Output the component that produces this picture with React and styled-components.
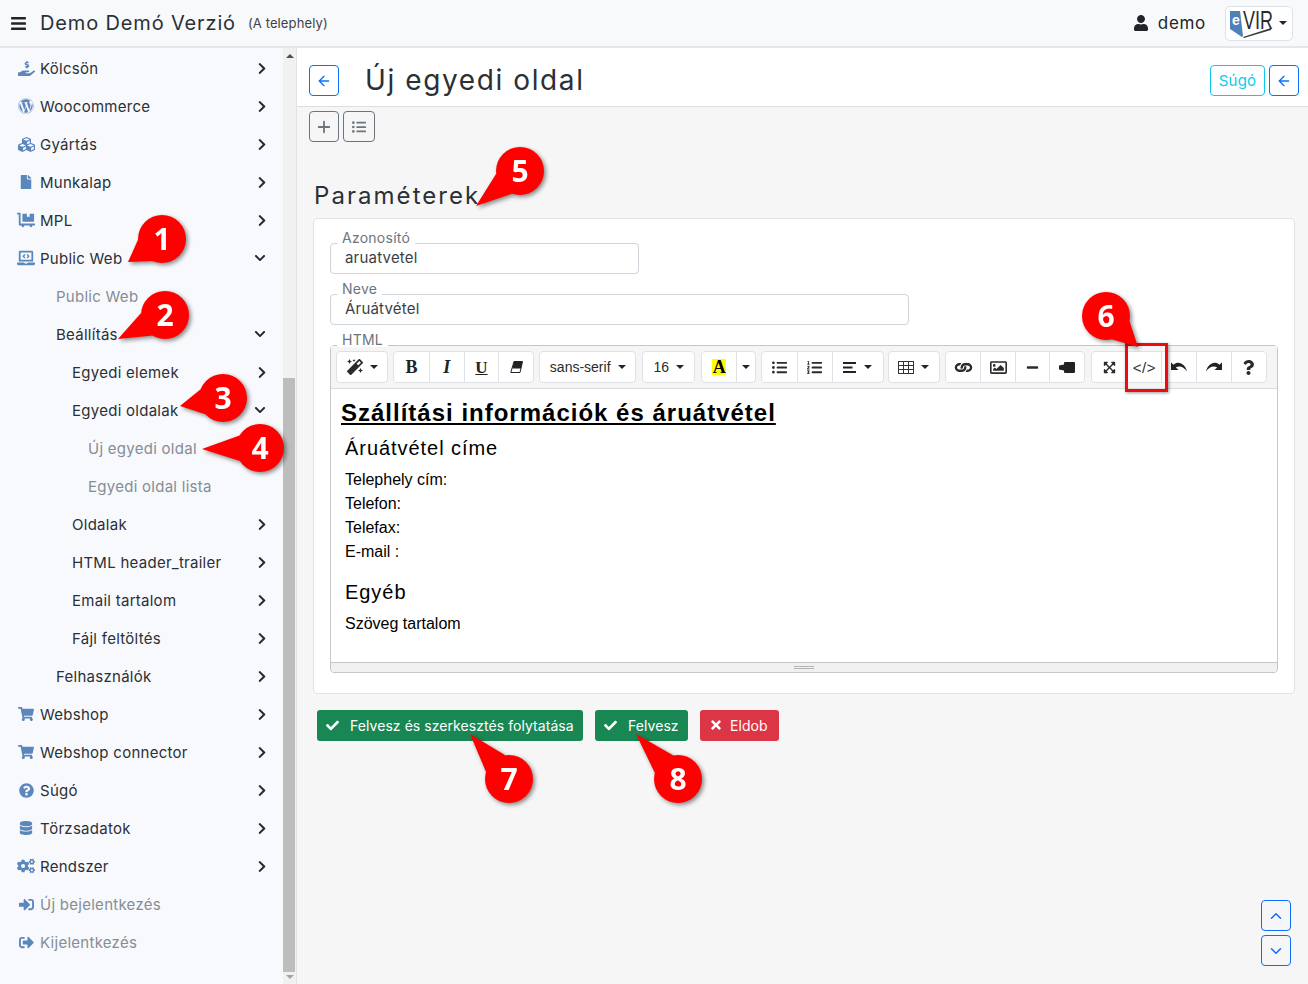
import React from "react";
import styled, { createGlobalStyle } from "styled-components";
import {
  FaBars, FaChevronDown, FaChevronRight, FaCheck, FaCogs, FaCubes, FaDatabase,
  FaDollyFlatbed, FaExpandArrowsAlt, FaFile, FaHandHoldingUsd, FaLaptopCode,
  FaLink, FaListOl, FaListUl, FaMagic, FaMinus, FaQuestion, FaQuestionCircle, FaRegImage,
  FaShoppingCart, FaSignInAlt, FaSignOutAlt, FaTimes, FaUser, FaWordpress,
} from "react-icons/fa";
import { ArrowLeft, ChevronDown, ChevronUp, Plus } from "lucide-react";

const GlobalStyle = createGlobalStyle`
  html, body { margin: 0; padding: 0; height: 100%; }
  body {
    font-family: Inter, "Open Sans", sans-serif;
    color: #212529;
    background: #f6f6f6;
    overflow: hidden;
  }
  * { box-sizing: border-box; }
`;

const Page = styled.div`
  position: relative;
  width: 1308px;
  height: 984px;
  display: flex;
  flex-direction: column;
  overflow: hidden;
`;

/* felso sav */
const TopBar = styled.header`
  height: 48px;
  flex: none;
  display: flex;
  align-items: center;
  padding: 0 15px 0 10px;
  background: #f8f9fa;
  border-bottom: 2px solid #e4e6e9;
  svg { flex: none; }
`;

const AppTitle = styled.span`
  margin-left: 13px;
  font-size: 20px;
  letter-spacing: 0.85px;
  color: #2b3036;
`;

const AppSub = styled.span`
  margin-left: 12px;
  font-size: 13px;
  letter-spacing: 0.12px;
  color: #3c4248;
`;

const UserBox = styled.div`
  margin-left: auto;
  display: flex;
  align-items: center;
  gap: 9px;
  font-size: 17px;
  letter-spacing: 0.7px;
`;

const LogoButton = styled.div`
  margin-left: 19px;
  width: 68px;
  height: 35px;
  display: flex;
  align-items: center;
  gap: 5px;
  padding-left: 4px;
  background: #fff;
  border: 1px solid #dee2e6;
  border-radius: 5px;
`;

const LogoSvg = styled.svg`
  overflow: visible;
`;

const Caret = styled.span`
  width: 0;
  height: 0;
  flex: none;
  border-left: 4px solid transparent;
  border-right: 4px solid transparent;
  border-top: 4px solid ${(p) => p.$color || "#212529"};
`;

const Body = styled.div`
  flex: 1;
  min-height: 0;
  display: flex;
`;

/* oldalsav */
const Sidebar = styled.nav`
  width: 283px;
  flex: none;
  padding-top: 1px;
  background: #f8f9fc;
  overflow: hidden;
`;

const NavRow = styled.div`
  height: 38px;
  display: flex;
  align-items: center;
  padding-left: ${(p) => p.$indent}px;
  font-size: 15px;
  letter-spacing: 0.27px;
  color: ${(p) => (p.$muted ? "#858d96" : "#2b3036")};
`;

const NavIcon = styled.span`
  width: 18px;
  flex: none;
  display: flex;
  justify-content: center;
  color: #5b87bd;
  margin-right: 5px;
`;

const NavArrow = styled.span`
  margin-left: auto;
  width: 12px;
  display: flex;
  justify-content: center;
  margin-right: ${(p) => (p.$open ? 17 : 15)}px;
  color: #212a36;
`;

const ScrollTrack = styled.div`
  width: 13px;
  flex: none;
  display: flex;
  flex-direction: column;
  align-items: center;
  padding-top: 6px;
  background: #f1f1f1;
`;

const ScrollThumb = styled.div`
  width: 12px;
  height: 594px;
  margin-top: 320px;
  align-self: flex-start;
  background: #bdbdbd;
`;

const TrackArrow = styled.span`
  width: 0;
  height: 0;
  border-left: 4px solid transparent;
  border-right: 4px solid transparent;
  ${(p) => (p.$down ? "border-top: 4px solid #a3a3a3; margin-top: 3px;" : "border-bottom: 4px solid #505050;")}
`;

/* tartalom */
const Main = styled.main`
  flex: 1;
  min-width: 0;
  border-left: 1px solid #e2e2e2;
  background: #f6f6f6;
`;

const TitleBar = styled.div`
  height: 59px;
  display: flex;
  align-items: center;
  gap: 4px;
  padding: 7px 9px 0 12px;
  background: #fff;
  border-bottom: 1px solid #dedede;
`;

const PageTitle = styled.h1`
  margin: 0 auto 2px 22px;
  font-size: 28px;
  font-weight: 400;
  letter-spacing: 1.6px;
  color: #2b3036;
`;

const OutlineButton = styled.button`
  height: 31px;
  width: ${(p) => p.$w || 30}px;
  padding: 0;
  display: inline-flex;
  align-items: center;
  justify-content: center;
  background: transparent;
  border: 1px solid ${(p) => p.$color};
  border-radius: 4px;
  color: ${(p) => p.$color};
  font: inherit;
  font-size: 15px;
  letter-spacing: 0.2px;
`;

const Content = styled.div`
  padding: 4px 13px 0 16px;
`;

const ActionRow = styled.div`
  display: flex;
  gap: 4px;
  margin-left: -4px;
`;

const SectionTitle = styled.h2`
  margin: 37px 0 8px 1px;
  height: 31px;
  line-height: 33px;
  font-size: 24px;
  font-weight: 400;
  letter-spacing: 2.05px;
  color: #2b3036;
`;

const Card = styled.section`
  height: 476px;
  padding: 24px 16px 0;
  background: #fff;
  border: 1px solid #e3e3e3;
  border-radius: 4px;
`;

const Field = styled.div`
  position: relative;
  width: ${(p) => p.$w}px;
  height: 31px;
  margin-bottom: 20px;
  padding: 0 0 2px 14px;
  display: flex;
  align-items: center;
  border: 1px solid #ced4da;
  border-radius: 4px;
  font-size: 15px;
  letter-spacing: 0.2px;
  color: #3a3f45;
`;

const FloatLabel = styled.label`
  position: absolute;
  left: 6px;
  top: -15px;
  padding: 0 5px;
  height: 18px;
  line-height: 18px;
  font-size: 14px;
  letter-spacing: 0.25px;
  color: #6c757d;
  background: linear-gradient(#fff 16px, transparent 16px);
`;

const Editor = styled.div`
  position: relative;
  width: 948px;
  height: 328px;
  display: flex;
  flex-direction: column;
  border: 1px solid #c6c6c6;
  border-radius: 4px;
`;

const Toolbar = styled.div`
  height: 43px;
  flex: none;
  display: flex;
  align-items: center;
  padding: 0 0 0 5px;
  background: #f5f5f5;
  border-bottom: 1px solid #dcdcdc;
`;

const ToolGroup = styled.div`
  display: flex;
  height: 32px;
  margin-right: ${(p) => p.$gap ?? 5}px;
  background: #fff;
  border: 1px solid #dee2e6;
  border-radius: 4px;
`;

const Tool = styled.div`
  width: ${(p) => p.$w || 34.8}px;
  display: flex;
  align-items: center;
  justify-content: center;
  gap: ${(p) => p.$space ?? 7}px;
  font-family: "Liberation Sans", sans-serif;
  font-size: 14px;
  color: #2b2b2b;
  & + & { border-left: 1px solid #dee2e6; }
`;

const SerifGlyph = styled.span`
  font-family: "Liberation Serif", serif;
  font-weight: 700;
  font-size: ${(p) => p.$size || 18}px;
  font-style: ${(p) => (p.$italic ? "italic" : "normal")};
  text-decoration: ${(p) => (p.$under ? "underline" : "none")};
  line-height: 1;
  color: #222;
`;

const HighlightA = styled.span`
  width: 14px;
  height: 16px;
  display: flex;
  align-items: center;
  justify-content: center;
  background: #ff0;
  font-family: "Liberation Serif", serif;
  font-weight: 700;
  font-size: 18px;
  color: #000;
`;

const CodeGlyph = styled.span`
  font-size: 15px;
  letter-spacing: 0.6px;
`;

const FlatLink = styled(FaLink)`
  transform: rotate(45deg);
`;

const FlipIcon = styled.svg`
  transform: ${(p) => (p.$flip ? "scaleX(-1)" : "none")};
`;

const EditArea = styled.div`
  flex: 1;
  min-height: 0;
  padding: 10px 10px 0;
  background: #fff;
  font-family: "Liberation Sans", Arial, sans-serif;
  color: #000;
`;

const DocTitle = styled.h1`
  margin: 0 0 9px;
  font-size: 24px;
  line-height: 28px;
  font-weight: 700;
  letter-spacing: 1px;
  text-decoration: underline;
`;

const DocHeading = styled.h3`
  margin: ${(p) => p.$top}px 0 8px 4px;
  font-size: 20px;
  line-height: 24px;
  font-weight: 400;
  letter-spacing: 0.95px;
`;

const DocLine = styled.p`
  margin: 0 0 0 4px;
  font-size: 16px;
  line-height: 24px;
`;

const StatusBar = styled.div`
  height: 10px;
  flex: none;
  display: flex;
  flex-direction: column;
  align-items: center;
  justify-content: center;
  gap: 1px;
  background: #f0f0f0;
  border-top: 1px solid #c6c6c6;
  border-radius: 0 0 4px 4px;
`;

const GripLine = styled.span`
  width: 20px;
  height: 1px;
  background: #b4b4b4;
`;

const Buttons = styled.div`
  display: flex;
  gap: 12px;
  margin: 16px 0 0 4px;
`;

const SolidButton = styled.button`
  height: 31px;
  width: ${(p) => p.$w}px;
  padding: 0 0 1px 9px;
  display: flex;
  align-items: center;
  gap: ${(p) => p.$gap || 11}px;
  border: 0;
  border-radius: 3px;
  background: ${(p) => p.$bg};
  color: #fff;
  font: inherit;
  font-size: 14px;
  letter-spacing: 0.06px;
  white-space: nowrap;
  svg { flex: none; }
`;

const ScrollButtons = styled.div`
  position: absolute;
  right: 17px;
  bottom: 18px;
  display: flex;
  flex-direction: column;
  gap: 4px;
`;

/* kiemelo buborekok a kep folott */
const Balloon = styled.svg`
  position: absolute;
  left: 0;
  top: 0;
  overflow: visible;
  pointer-events: none;
  filter: drop-shadow(2px 2px 2px rgba(0, 0, 0, 0.45));
`;

const BalloonDigit = styled.text`
  font-family: "Open Sans", sans-serif;
  font-size: 30px;
  font-weight: 700;
  fill: #fff;
  text-anchor: middle;
`;

const RedFrame = styled.div`
  position: absolute;
  left: 1125px;
  top: 343px;
  width: 43px;
  height: 49px;
  border: 3px solid #ee0a0e;
  box-shadow: 1px 1px 3px rgba(0, 0, 0, 0.4);
`;

const navItems = [
  { label: "Kölcsön", icon: <FaHandHoldingUsd size={17} />, arrow: "right" },
  { label: "Woocommerce", icon: <FaWordpress size={16} />, arrow: "right" },
  { label: "Gyártás", icon: <FaCubes size={17} />, arrow: "right" },
  { label: "Munkalap", icon: <FaFile size={14} />, arrow: "right" },
  { label: "MPL", icon: <FaDollyFlatbed size={18} />, arrow: "right" },
  { label: "Public Web", icon: <FaLaptopCode size={18} />, arrow: "down" },
  { label: "Public Web", indent: 56, muted: true },
  { label: "Beállítás", indent: 56, arrow: "down" },
  { label: "Egyedi elemek", indent: 72, arrow: "right" },
  { label: "Egyedi oldalak", indent: 72, arrow: "down" },
  { label: "Új egyedi oldal", indent: 88, muted: true },
  { label: "Egyedi oldal lista", indent: 88, muted: true },
  { label: "Oldalak", indent: 72, arrow: "right" },
  { label: "HTML header_trailer", indent: 72, arrow: "right" },
  { label: "Email tartalom", indent: 72, arrow: "right" },
  { label: "Fájl feltöltés", indent: 72, arrow: "right" },
  { label: "Felhasználók", indent: 56, arrow: "right" },
  { label: "Webshop", icon: <FaShoppingCart size={16} />, arrow: "right" },
  { label: "Webshop connector", icon: <FaShoppingCart size={16} />, arrow: "right" },
  { label: "Súgó", icon: <FaQuestionCircle size={15} />, arrow: "right" },
  { label: "Törzsadatok", icon: <FaDatabase size={14} />, arrow: "right" },
  { label: "Rendszer", icon: <FaCogs size={18} />, arrow: "right" },
  { label: "Új bejelentkezés", icon: <FaSignInAlt size={15} />, muted: true },
  { label: "Kijelentkezés", icon: <FaSignOutAlt size={15} />, muted: true },
];

const balloons = [
  { n: 1, cx: 162, cy: 239, tx: 128, ty: 262 },
  { n: 2, cx: 165, cy: 315, tx: 118, ty: 339 },
  { n: 3, cx: 223, cy: 398, tx: 180, ty: 406 },
  { n: 4, cx: 260, cy: 448, tx: 202, ty: 449 },
  { n: 5, cx: 520, cy: 171, tx: 476, ty: 206 },
  { n: 6, cx: 1106, cy: 316, tx: 1138, ty: 347 },
  { n: 7, cx: 509, cy: 779, tx: 470, ty: 734 },
  { n: 8, cx: 678, cy: 779, tx: 636, ty: 734 },
];

function wedge({ cx, cy, tx, ty }) {
  const r = 24;
  const a = Math.atan2(ty - cy, tx - cx);
  const spread = 0.56;
  const p1 = [cx + r * Math.cos(a - spread), cy + r * Math.sin(a - spread)];
  const p2 = [cx + r * Math.cos(a + spread), cy + r * Math.sin(a + spread)];
  return `${tx},${ty} ${p1[0]},${p1[1]} ${p2[0]},${p2[1]}`;
}

function Logo() {
  return (
    <LogoSvg width="44" height="30" viewBox="0 0 44 30" aria-label="eVIR">
      <polygon points="0,3 10,3 13,28 12,29 0,21" fill="#4f81b8" />
      <text x="2" y="17" fontFamily="Liberation Sans, sans-serif" fontWeight="700" fontSize="14" fill="#fff">e</text>
      <polygon points="13,29 41,20 41,22 14,30" fill="#3a3a3a" />
      <text transform="translate(13 21) scale(0.72 1)" fontFamily="Liberation Sans, sans-serif" fontSize="25" fill="#2b2b2b">VIR</text>
    </LogoSvg>
  );
}

function TableIcon() {
  return (
    <svg width="16" height="13" viewBox="0 0 16 13" fill="none" stroke="#333" strokeWidth="1">
      <rect x="0.5" y="0.5" width="15" height="12" />
      <path d="M0 4.5h16M0 8.5h16M5.5 0v13M10.5 0v13" />
    </svg>
  );
}

function EraserIcon() {
  return (
    <svg width="13" height="12" viewBox="0 0 13 12">
      <path d="M4 .5h8.5L10 11.5H.8z" fill="#fff" stroke="#222" strokeWidth="1" />
      <path d="M4 .5h8.5L11 7.5H2.4z" fill="#222" />
    </svg>
  );
}

function AlignIcon() {
  return (
    <svg width="14" height="11" viewBox="0 0 14 11" fill="#222">
      <rect width="13" height="2" />
      <rect y="4.5" width="9.5" height="2" />
      <rect y="9" width="13" height="2" />
    </svg>
  );
}

function VideoIcon() {
  return (
    <svg width="16" height="11" viewBox="0 0 16 11" fill="#222">
      <rect x="5" width="11" height="11" rx="1" />
      <path d="M0 3.5l5-1v6l-5-1z" />
    </svg>
  );
}

function HistoryIcon({ flip }) {
  return (
    <FlipIcon $flip={flip} width="18" height="12" viewBox="0 0 18 12" fill="#222">
      <path d="M1 1.5V9h7.5L5.8 6.5C9 4.4 13.5 5.2 17 10.5 15.6 3.6 8.6-1 3.6 3.8z" />
    </FlipIcon>
  );
}

function App() {
  return (
    <Page>
      <GlobalStyle />
      <TopBar>
        <FaBars size={17} color="#212529" />
        <AppTitle>Demo Demó Verzió</AppTitle>
        <AppSub>(A telephely)</AppSub>
        <UserBox>
          <FaUser size={16} />
          demo
        </UserBox>
        <LogoButton>
          <Logo />
          <Caret />
        </LogoButton>
      </TopBar>

      <Body>
        <Sidebar>
          {navItems.map((item, i) => (
            <NavRow key={i} $indent={item.indent || 17} $muted={item.muted}>
              {item.icon && <NavIcon>{item.icon}</NavIcon>}
              {item.label}
              {item.arrow && (
                <NavArrow $open={item.arrow === "down"}>
                  {item.arrow === "down" ? <FaChevronDown size={12} /> : <FaChevronRight size={13} />}
                </NavArrow>
              )}
            </NavRow>
          ))}
        </Sidebar>
        <ScrollTrack>
          <TrackArrow />
          <ScrollThumb />
          <TrackArrow $down />
        </ScrollTrack>

        <Main>
          <TitleBar>
            <OutlineButton $color="#0d6efd"><ArrowLeft size={16} /></OutlineButton>
            <PageTitle>Új egyedi oldal</PageTitle>
            <OutlineButton $color="#0dcaf0" $w={55}>Súgó</OutlineButton>
            <OutlineButton $color="#0d6efd"><ArrowLeft size={16} /></OutlineButton>
          </TitleBar>

          <Content>
            <ActionRow>
              <OutlineButton $color="#6c757d"><Plus size={18} strokeWidth={2.4} /></OutlineButton>
              <OutlineButton $color="#6c757d" $w={32}><FaListUl size={14} /></OutlineButton>
            </ActionRow>

            <SectionTitle>Paraméterek</SectionTitle>

            <Card>
              <Field $w={309}>
                <FloatLabel>Azonosító</FloatLabel>
                aruatvetel
              </Field>
              <Field $w={579}>
                <FloatLabel>Neve</FloatLabel>
                Áruátvétel
              </Field>
              <Editor>
                <FloatLabel>HTML</FloatLabel>
                <Toolbar>
                  <ToolGroup>
                    <Tool $w={50}><FaMagic size={16} /><Caret /></Tool>
                  </ToolGroup>
                  <ToolGroup>
                    <Tool><SerifGlyph>B</SerifGlyph></Tool>
                    <Tool><SerifGlyph $italic>I</SerifGlyph></Tool>
                    <Tool><SerifGlyph $under $size={17}>U</SerifGlyph></Tool>
                    <Tool><EraserIcon /></Tool>
                  </ToolGroup>
                  <ToolGroup $gap={6}>
                    <Tool $w={95}>sans-serif<Caret /></Tool>
                  </ToolGroup>
                  <ToolGroup $gap={6}>
                    <Tool $w={51}>16<Caret /></Tool>
                  </ToolGroup>
                  <ToolGroup>
                    <Tool $w={34}><HighlightA>A</HighlightA></Tool>
                    <Tool $w={19}><Caret /></Tool>
                  </ToolGroup>
                  <ToolGroup $gap={4}>
                    <Tool><FaListUl size={15} /></Tool>
                    <Tool><FaListOl size={15} /></Tool>
                    <Tool $w={51}><AlignIcon /><Caret /></Tool>
                  </ToolGroup>
                  <ToolGroup>
                    <Tool $w={50}><TableIcon /><Caret /></Tool>
                  </ToolGroup>
                  <ToolGroup $gap={6}>
                    <Tool $w={34.5}><FlatLink size={15} /></Tool>
                    <Tool $w={34.5}><FaRegImage size={17} /></Tool>
                    <Tool $w={34.5}><FaMinus size={13} /></Tool>
                    <Tool $w={34.5}><VideoIcon /></Tool>
                  </ToolGroup>
                  <ToolGroup $gap={0}>
                    <Tool><FaExpandArrowsAlt size={13} /></Tool>
                    <Tool><CodeGlyph>&lt;/&gt;</CodeGlyph></Tool>
                    <Tool><HistoryIcon /></Tool>
                    <Tool><HistoryIcon flip /></Tool>
                    <Tool><FaQuestion size={15} /></Tool>
                  </ToolGroup>
                </Toolbar>
                <EditArea>
                  <DocTitle>Szállítási információk és áruátvétel</DocTitle>
                  <DocHeading $top={0}>Áruátvétel címe</DocHeading>
                  <DocLine>Telephely cím:</DocLine>
                  <DocLine>Telefon:</DocLine>
                  <DocLine>Telefax:</DocLine>
                  <DocLine>E-mail :</DocLine>
                  <DocHeading $top={16}>Egyéb</DocHeading>
                  <DocLine>Szöveg tartalom</DocLine>
                </EditArea>
                <StatusBar>
                  <GripLine />
                  <GripLine />
                </StatusBar>
              </Editor>
            </Card>

            <Buttons>
              <SolidButton $bg="#198754" $w={266}><FaCheck size={13} />Felvesz és szerkesztés folytatása</SolidButton>
              <SolidButton $bg="#198754" $w={93}><FaCheck size={13} />Felvesz</SolidButton>
              <SolidButton $bg="#dc3545" $w={79} $gap={7}><FaTimes size={14} />Eldob</SolidButton>
            </Buttons>
          </Content>
        </Main>
      </Body>

      <ScrollButtons>
        <OutlineButton $color="#0d6efd"><ChevronUp size={18} /></OutlineButton>
        <OutlineButton $color="#0d6efd"><ChevronDown size={18} /></OutlineButton>
      </ScrollButtons>

      <RedFrame />
      {balloons.map((b) => (
        <Balloon key={b.n} width="1308" height="984" viewBox="0 0 1308 984">
          <circle cx={b.cx} cy={b.cy} r="24" fill="#f00" />
          <polygon points={wedge(b)} fill="#f00" />
          <BalloonDigit x={b.cx} y={b.cy + 11}>{b.n}</BalloonDigit>
        </Balloon>
      ))}
    </Page>
  );
}

export default App;
